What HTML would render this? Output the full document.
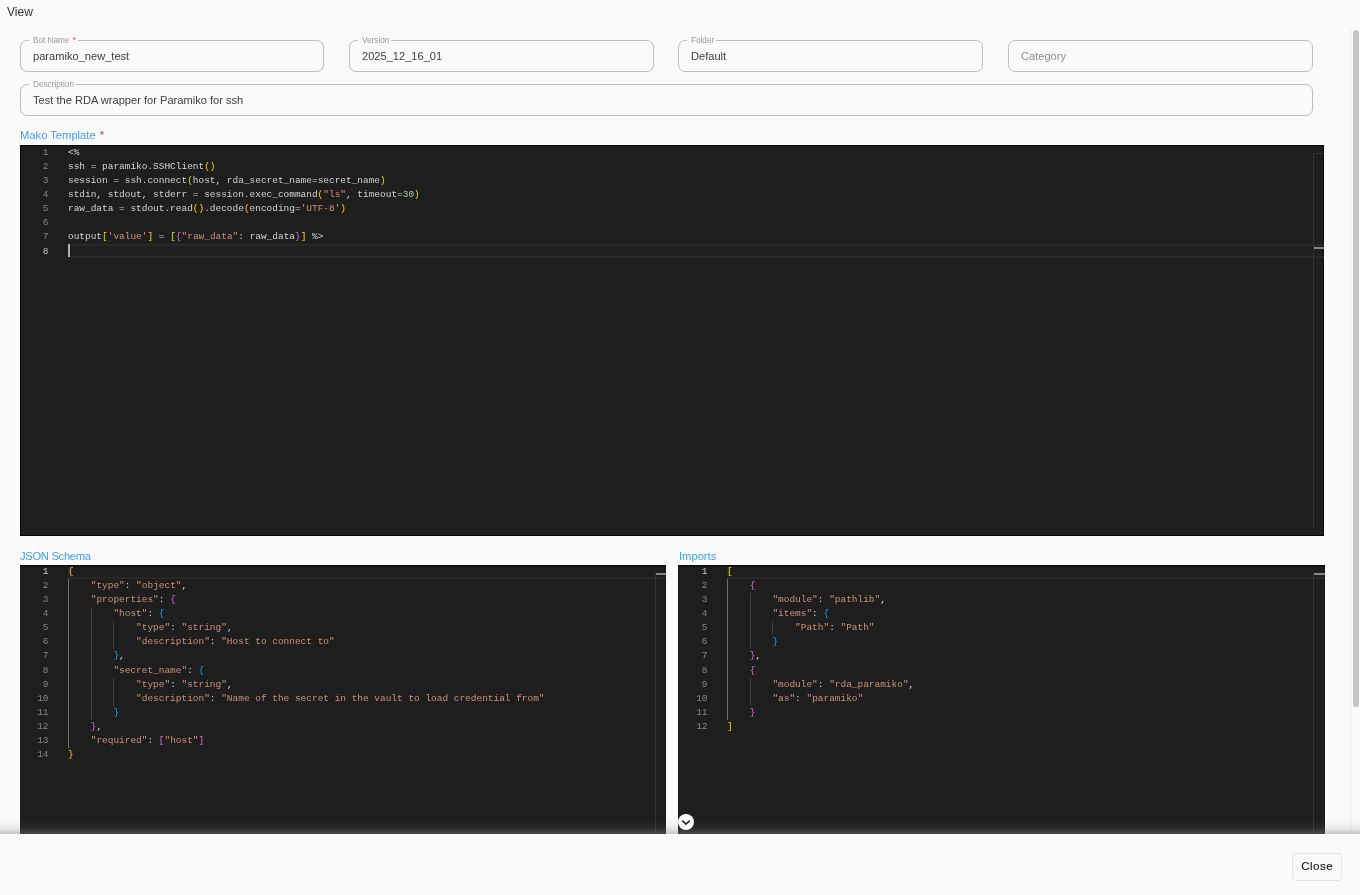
<!DOCTYPE html>
<html><head><meta charset="utf-8">
<style>
*{box-sizing:border-box;margin:0;padding:0}
html,body{width:1368px;height:895px;overflow:hidden;background:#fff;font-family:"Liberation Sans",sans-serif}
#dlg{position:absolute;left:0;top:0;width:1360px;height:895px;background:#fafafa;will-change:transform}
.title{position:absolute;left:7px;top:5px;font-size:12px;color:#333}
.fld{position:absolute;height:32px;border:1px solid #bdbdbd;border-radius:7px}
.fld .lab{position:absolute;left:8px;top:-7px;padding:0 2px 0 4px;background:#fafafa;font-size:8.2px;color:#9a9a9a;line-height:13px}
.fld .lab b{color:#f44;font-weight:normal;margin-left:1px}
.fld .val{position:absolute;left:12px;top:8px;font-size:11.1px;color:#404040;line-height:14px}
.fld .ph{color:#8f8f8f}
.elab{position:absolute;font-size:11.2px;color:#3f9ff0;line-height:14px}
.elab b{color:#e53935;font-weight:normal;margin-left:1px}
.ed{will-change:transform;position:absolute;background:#1e1e1e;overflow:hidden;font-family:"Liberation Mono",monospace;font-size:9.46px;color:#d4d4d4;box-shadow:inset 0 0 0 1px #171717,0 -1px 0 #fff,-1px 0 0 #fff,1px 0 0 #fff}
#mako{box-shadow:inset 0 0 0 1px #080808,0 -1px 0 #fff,-1px 0 0 #fff,1px 0 0 #fff}
#json .lines::after,#imp .lines::after{content:"";position:absolute;left:0;right:0;top:0;height:2px;background:linear-gradient(#0a0a0a 50%,#181818 50%)}
#json{box-shadow:inset 0 0 0 1px #171717,0 -1px 0 #fff,-1px 0 0 #fff,1px 0 0 #fff}
#json .ln,#json .num{line-height:14px}
#imp .ln,#imp .num{line-height:14px}
#imp .lines{left:1px}
#imp{box-shadow:inset 0 0 0 1px #171717,0 -1px 0 #fff,-1px 0 0 #fff,1px 0 0 #fff}
.lines{position:absolute;left:0;top:0;right:0;bottom:0}
.ln{position:absolute;left:48px;height:14px;line-height:16px;white-space:pre}
.num{position:absolute;left:0;width:28.5px;text-align:right;color:#858585;height:14px;line-height:16px}
.num.a{color:#c6c6c6}
.cur{position:absolute;height:14.08px;border:2px solid #282828}
.s{color:#ce9178}.n{color:#b5cea8}.g{color:#ffd700}.o{color:#da70d6}.bl{color:#179fff}
.ig{position:absolute;width:1px;background:#404040}
.ig.act{background:#707070}
#footer{position:absolute;left:0;top:834px;width:1360px;height:61px;background:#fafafa}
.btn{position:absolute;left:1292px;top:853px;width:50px;height:28px;border:1px solid #e4e4e4;border-radius:4px;font-size:11.6px;color:#222;text-align:center;line-height:24px;letter-spacing:0.5px;text-indent:0.5px;-webkit-text-stroke:0.15px #222}
.ruler{position:absolute;border-left:1px solid #333;border-top:1px solid #333}
.rmark{position:absolute;height:2px;background:#858585}
.cursor{position:absolute;width:2px;background:#aeafad}
#sbline{position:absolute;left:1350px;top:28px;width:1px;height:806px;background:#ececec}
#sbthumb{position:absolute;left:1353px;top:30px;width:6px;height:677px;border-radius:3px;background:#c4c4c4}
#fshadow{position:absolute;left:0;top:819px;width:1360px;height:15px;background:linear-gradient(rgba(131,131,131,0),rgba(131,131,131,0.05) 35%,rgba(131,131,131,0.17) 65%,rgba(131,131,131,0.36) 90%,rgba(131,131,131,0.44))}
#chev{position:absolute;left:677.6px;top:813.8px;width:16px;height:16px;border-radius:8px;background:#fff}
</style></head><body>
<div id="dlg">
<div class="title">View</div>

<div class="fld" style="left:20px;top:40px;width:304px"><span class="lab">Bot Name <b>*</b></span><span class="val">paramiko_new_test</span></div>
<div class="fld" style="left:349px;top:40px;width:305px"><span class="lab">Version</span><span class="val">2025_12_16_01</span></div>
<div class="fld" style="left:678px;top:40px;width:305px"><span class="lab">Folder</span><span class="val">Default</span></div>
<div class="fld" style="left:1008px;top:40px;width:305px"><span class="val ph">Category</span></div>
<div class="fld" style="left:20px;top:84px;width:1293px"><span class="lab">Description</span><span class="val">Test the RDA wrapper for Paramiko for ssh</span></div>

<div class="elab" style="left:20px;top:128px">Mako Template <b>*</b></div>
<div class="ed" id="mako" style="left:20px;top:145px;width:1304px;height:391px">
<div class="lines">
<div class="num" style="top:0.00px">1</div>
<div class="num" style="top:14.08px">2</div>
<div class="num" style="top:28.16px">3</div>
<div class="num" style="top:42.24px">4</div>
<div class="num" style="top:56.32px">5</div>
<div class="num" style="top:70.40px">6</div>
<div class="num" style="top:84.48px">7</div>
<div class="num a" style="top:98.56px">8</div>
<div class="cur" style="top:98.56px;left:48px;width:1260px"></div>
<div class="ln" style="top:0.00px">&lt;%</div>
<div class="ln" style="top:14.08px">ssh = paramiko.SSHClient<span class="g">()</span></div>
<div class="ln" style="top:28.16px">session = ssh.connect<span class="g">(</span>host, rda_secret_name=secret_name<span class="g">)</span></div>
<div class="ln" style="top:42.24px">stdin, stdout, stderr = session.exec_command<span class="g">(</span><span class="s">"ls"</span>, timeout=<span class="n">30</span><span class="g">)</span></div>
<div class="ln" style="top:56.32px">raw_data = stdout.read<span class="g">()</span>.decode<span class="g">(</span>encoding=<span class="s">'UTF-8'</span><span class="g">)</span></div>
<div class="ln" style="top:70.40px"></div>
<div class="ln" style="top:84.48px">output<span class="g">[</span><span class="s">'value'</span><span class="g">]</span> = <span class="g">[</span><span class="o">{</span><span class="s">"raw_data"</span>: raw_data<span class="o">}</span><span class="g">]</span> %&gt;</div>
<div class="ln" style="top:98.56px"></div>
</div>
<div class="ruler" style="left:1293px;top:8px;width:11px;height:375px"></div>
<div class="rmark" style="left:1294px;top:101.5px;width:10px"></div>
<div class="cursor" style="left:48px;top:99px;height:13px"></div>
</div>

<div class="elab" style="left:20px;top:549px;letter-spacing:-0.3px">JSON Schema</div>
<div class="ed" id="json" style="left:20px;top:565px;width:646px;height:269px">
<div class="lines">
<div class="num a" style="top:0.00px">1</div>
<div class="num" style="top:14.08px">2</div>
<div class="num" style="top:28.16px">3</div>
<div class="num" style="top:42.24px">4</div>
<div class="num" style="top:56.32px">5</div>
<div class="num" style="top:70.40px">6</div>
<div class="num" style="top:84.48px">7</div>
<div class="num" style="top:98.56px">8</div>
<div class="num" style="top:112.64px">9</div>
<div class="num" style="top:126.72px">10</div>
<div class="num" style="top:140.80px">11</div>
<div class="num" style="top:154.88px">12</div>
<div class="num" style="top:168.96px">13</div>
<div class="num" style="top:183.04px">14</div>
<div class="cur" style="top:0.00px;left:48px;width:602px"></div>
<div class="ig act" style="left:48.00px;top:14.08px;height:168.96px"></div>
<div class="ig" style="left:70.70px;top:42.24px;height:112.64px"></div>
<div class="ig" style="left:93.41px;top:56.32px;height:28.16px"></div>
<div class="ig" style="left:93.41px;top:112.64px;height:28.16px"></div>
<div class="ln" style="top:0.00px"><span class="g">{</span></div>
<div class="ln" style="top:14.08px">    <span class="s">"type"</span>: <span class="s">"object"</span>,</div>
<div class="ln" style="top:28.16px">    <span class="s">"properties"</span>: <span class="o">{</span></div>
<div class="ln" style="top:42.24px">        <span class="s">"host"</span>: <span class="bl">{</span></div>
<div class="ln" style="top:56.32px">            <span class="s">"type"</span>: <span class="s">"string"</span>,</div>
<div class="ln" style="top:70.40px">            <span class="s">"description"</span>: <span class="s">"Host to connect to"</span></div>
<div class="ln" style="top:84.48px">        <span class="bl">}</span>,</div>
<div class="ln" style="top:98.56px">        <span class="s">"secret_name"</span>: <span class="bl">{</span></div>
<div class="ln" style="top:112.64px">            <span class="s">"type"</span>: <span class="s">"string"</span>,</div>
<div class="ln" style="top:126.72px">            <span class="s">"description"</span>: <span class="s">"Name of the secret in the vault to load credential from"</span></div>
<div class="ln" style="top:140.80px">        <span class="bl">}</span></div>
<div class="ln" style="top:154.88px">    <span class="o">}</span>,</div>
<div class="ln" style="top:168.96px">    <span class="s">"required"</span>: <span class="o">[</span><span class="s">"host"</span><span class="o">]</span></div>
<div class="ln" style="top:183.04px"><span class="g">}</span></div>
</div>
<div class="ruler" style="left:635px;top:9px;width:11px;height:300px;border-top:0"></div>
<div class="rmark" style="left:636px;top:8px;width:10px"></div>
</div>

<div class="elab" style="left:679px;top:549px">Imports</div>
<div class="ed" id="imp" style="left:678px;top:565px;width:647px;height:269px">
<div class="lines">
<div class="num a" style="top:0.00px">1</div>
<div class="num" style="top:14.08px">2</div>
<div class="num" style="top:28.16px">3</div>
<div class="num" style="top:42.24px">4</div>
<div class="num" style="top:56.32px">5</div>
<div class="num" style="top:70.40px">6</div>
<div class="num" style="top:84.48px">7</div>
<div class="num" style="top:98.56px">8</div>
<div class="num" style="top:112.64px">9</div>
<div class="num" style="top:126.72px">10</div>
<div class="num" style="top:140.80px">11</div>
<div class="num" style="top:154.88px">12</div>
<div class="cur" style="top:0.00px;left:48px;width:603px"></div>
<div class="ig act" style="left:48.00px;top:14.08px;height:140.80px"></div>
<div class="ig" style="left:70.70px;top:28.16px;height:56.32px"></div>
<div class="ig" style="left:70.70px;top:112.64px;height:28.16px"></div>
<div class="ig" style="left:93.41px;top:56.32px;height:14.08px"></div>
<div class="ln" style="top:0.00px"><span class="g">[</span></div>
<div class="ln" style="top:14.08px">    <span class="o">{</span></div>
<div class="ln" style="top:28.16px">        <span class="s">"module"</span>: <span class="s">"pathlib"</span>,</div>
<div class="ln" style="top:42.24px">        <span class="s">"items"</span>: <span class="bl">{</span></div>
<div class="ln" style="top:56.32px">            <span class="s">"Path"</span>: <span class="s">"Path"</span></div>
<div class="ln" style="top:70.40px">        <span class="bl">}</span></div>
<div class="ln" style="top:84.48px">    <span class="o">}</span>,</div>
<div class="ln" style="top:98.56px">    <span class="o">{</span></div>
<div class="ln" style="top:112.64px">        <span class="s">"module"</span>: <span class="s">"rda_paramiko"</span>,</div>
<div class="ln" style="top:126.72px">        <span class="s">"as"</span>: <span class="s">"paramiko"</span></div>
<div class="ln" style="top:140.80px">    <span class="o">}</span></div>
<div class="ln" style="top:154.88px"><span class="g">]</span></div>
</div>
<div class="ruler" style="left:635px;top:9px;width:12px;height:300px;border-top:0"></div>
<div class="rmark" style="left:636px;top:8px;width:11px"></div>
</div>

<div id="sbline"></div><div id="sbthumb"></div>
<div id="fshadow"></div>
<div id="chev"><svg width="16" height="16" viewBox="0 0 16 16"><path d="M4.2 6.6 L8 10.2 L11.8 6.6" fill="none" stroke="#2a2a2a" stroke-width="1.7"/></svg></div>
<div id="footer">
</div>
<div class="btn">Close</div>
</div>
</body></html>
